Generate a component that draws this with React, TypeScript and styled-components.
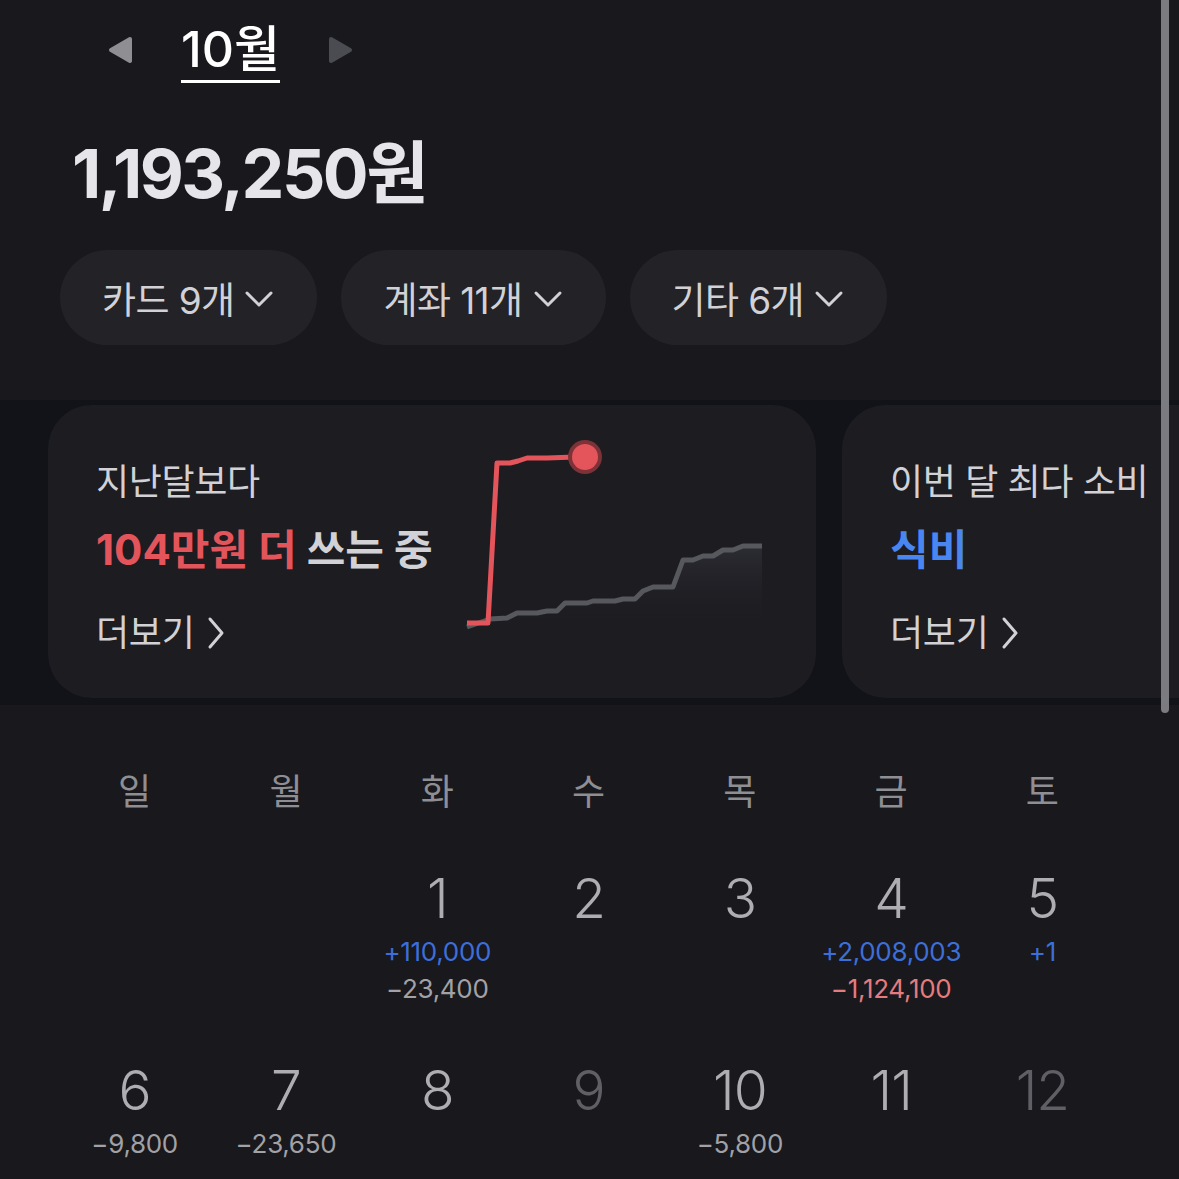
import React from "react";
import styled, { createGlobalStyle } from "styled-components";

const Global = createGlobalStyle`
  html, body { margin: 0; padding: 0; background: #18181d; }
  body { font-family: "Inter", "Noto Sans CJK KR", sans-serif; }
  * { box-sizing: border-box; }
`;

const Page = styled.div`
  position: relative;
  width: 1179px;
  height: 1179px;
  overflow: hidden;
  background: #18181d;
  color: #e5e5ea;
  font-family: "Inter", "Noto Sans CJK KR", sans-serif;
`;

const Header = styled.div`
  display: flex;
  align-items: center;
  height: 100px;
  padding-left: 107px;
  gap: 47px;
`;

const Arrow = styled.svg`
  width: 27px;
  height: 30px;
  display: block;
`;

const MonthTitle = styled.div`
  font-size: 50px;
  font-weight: 500;
  color: #ffffff;
  line-height: 1;
  letter-spacing: 0;
  padding-bottom: 6px;
  border-bottom: 3px solid #ffffff;
  margin-top: 6px;
`;

const Total = styled.div`
  margin: 33px 0 0 72px;
  font-size: 68px;
  font-weight: 700;
  color: #e5e5ea;
  line-height: 80px;
  letter-spacing: -2.5px;
`;

const Pills = styled.div`
  display: flex;
  gap: 24px;
  padding-left: 60px;
  margin-top: 37px;
`;

const Pill = styled.div`
  display: flex;
  align-items: center;
  gap: 10px;
  height: 95px;
  padding: 0 43px 0 42px;
  border-radius: 48px;
  background: #222227;
  color: #d1d1d6;
  font-size: 37px;
  font-weight: 400;
  letter-spacing: -0.6px;
`;

const Chevron = styled.svg`
  width: 30px;
  height: 30px;
  display: block;
`;

const CardBand = styled.div`
  display: flex;
  gap: 26px;
  margin-top: 55px;
  padding: 5px 0 7px 48px;
  background: #121318;
`;

const Card = styled.div<{ $w: number }>`
  flex: 0 0 ${(p) => p.$w}px;
  height: 293px;
  border-radius: 44px;
  background: #1c1c21;
  display: flex;
  padding-left: 48px;
`;

const CardText = styled.div`
  width: 364px;
  display: flex;
  flex-direction: column;
  padding-top: 52px;
`;

const CardLabel = styled.div`
  font-size: 36px;
  color: #d1d1d6;
  line-height: 50px;
  letter-spacing: -0.4px;
  white-space: nowrap;
`;

const CardHeadline = styled.div`
  font-size: 42px;
  font-weight: 700;
  color: #d1d1d6;
  line-height: 50px;
  margin-top: 18px;
  letter-spacing: 0;
  white-space: nowrap;
`;

const Accent = styled.span<{ $c: string }>`
  color: ${(p) => p.$c};
`;

const More = styled.div`
  display: flex;
  align-items: center;
  gap: 12px;
  margin-top: 33px;
  font-size: 36px;
  color: #d1d1d6;
  line-height: 50px;
  letter-spacing: -0.3px;
`;

const ChartBox = styled.svg`
  width: 310px;
  height: 210px;
  display: block;
  margin-top: 25px;
`;

const Calendar = styled.div`
  display: grid;
  grid-template-columns: repeat(7, 151.3px);
  padding-left: 59px;
  margin-top: 62px;
`;

const Weekday = styled.div`
  text-align: center;
  font-size: 36px;
  color: #8e8e93;
  line-height: 50px;
  height: 80px;
`;

const Cell = styled.div`
  display: flex;
  flex-direction: column;
  align-items: center;
  height: 192px;
  padding-top: 21px;
`;

const DayNum = styled.div<{ $dim?: boolean }>`
  font-size: 55px;
  font-weight: 300;
  line-height: 60px;
  color: ${(p) => (p.$dim ? "#5f5f65" : "#aeaeb2")};
  letter-spacing: -1px;
`;

const Amount = styled.div<{ $c: string }>`
  font-size: 26px;
  line-height: 37px;
  color: ${(p) => p.$c};
  letter-spacing: -0.3px;
  &:nth-child(2) {
    margin-top: 5px;
  }
`;

const ScrollThumb = styled.div`
  position: absolute;
  left: 1161px;
  top: 0;
  width: 8px;
  height: 713px;
  background: #7c7c80;
  border-radius: 0 0 4px 4px;
`;

const BLUE = "#3d6fd8";
const GREY = "#a1a1a6";
const RED = "#e57b7e";

type Day = { n: number; dim?: boolean; amounts?: { t: string; c: string }[] };

const weeks: (Day | null)[][] = [
  [
    null,
    null,
    { n: 1, amounts: [{ t: "+110,000", c: BLUE }, { t: "−23,400", c: GREY }] },
    { n: 2 },
    { n: 3 },
    { n: 4, amounts: [{ t: "+2,008,003", c: BLUE }, { t: "−1,124,100", c: RED }] },
    { n: 5, amounts: [{ t: "+1", c: BLUE }] },
  ],
  [
    { n: 6, amounts: [{ t: "−9,800", c: GREY }] },
    { n: 7, amounts: [{ t: "−23,650", c: GREY }] },
    { n: 8 },
    { n: 9, dim: true },
    { n: 10, amounts: [{ t: "−5,800", c: GREY }] },
    { n: 11 },
    { n: 12, dim: true },
  ],
];

const ChevronDown = () => (
  <Chevron viewBox="0 0 30 30">
    <path d="M3 10 L15 22 L27 10" fill="none" stroke="#d1d1d6" strokeWidth="3" strokeLinecap="round" strokeLinejoin="round" />
  </Chevron>
);

const ChevronRight = () => (
  <svg width="20" height="36" viewBox="0 0 20 36" style={{ display: "block" }}>
    <path d="M4 4 L16 18 L4 32" fill="none" stroke="#d1d1d6" strokeWidth="3" strokeLinecap="round" strokeLinejoin="round" />
  </svg>
);

const grey = [
  [7, 197], [30, 189], [47, 188], [57, 183], [77, 183], [87, 181], [97, 181], [105, 173],
  [127, 173], [133, 171], [155, 171], [163, 169], [175, 169], [183, 161], [193, 157], [213, 157],
  [223, 130], [233, 130], [243, 126], [253, 126], [263, 120], [273, 120], [283, 116], [302, 116],
];
const greyPts = grey.map((p) => p.join(",")).join(" ");
const greyArea = `M7,197 ${grey.map((p) => `L${p[0]},${p[1]}`).join(" ")} L302,200 L7,200 Z`;

const Chart = () => (
  <ChartBox viewBox="0 0 310 210">
    <defs>
      <linearGradient id="gfill" x1="0" y1="0" x2="0" y2="1">
        <stop offset="0" stopColor="#2c2c33" stopOpacity="1" />
        <stop offset="1" stopColor="#1c1c21" stopOpacity="0" />
      </linearGradient>
    </defs>
    <path d={greyArea} fill="url(#gfill)" />
    <polyline points={greyPts} fill="none" stroke="#57575e" strokeWidth="5" strokeLinejoin="round" />
    <polyline
      points="7,193 28,193 37,33 50,33 58,31 67,28 87,28 115,27"
      fill="none"
      stroke="#e3545b"
      strokeWidth="5"
      strokeLinejoin="round"
    />
    <circle cx="125" cy="27" r="17" fill="#7c3237" />
    <circle cx="125" cy="27" r="13" fill="#e3545b" />
  </ChartBox>
);

export default function App() {
  return (
    <Page>
      <Global />
      <Header>
        <Arrow viewBox="0 0 27 30">
          <path d="M23 4 L4 15 L23 26 Z" fill="#8e8e93" stroke="#8e8e93" strokeWidth="4" strokeLinejoin="round" />
        </Arrow>
        <MonthTitle>10월</MonthTitle>
        <Arrow viewBox="0 0 27 30">
          <path d="M4 4 L23 15 L4 26 Z" fill="#4b4b52" stroke="#4b4b52" strokeWidth="4" strokeLinejoin="round" />
        </Arrow>
      </Header>
      <Total>1,193,250원</Total>
      <Pills>
        <Pill>카드 9개<ChevronDown /></Pill>
        <Pill>계좌 11개<ChevronDown /></Pill>
        <Pill>기타 6개<ChevronDown /></Pill>
      </Pills>
      <CardBand>
        <Card $w={768}>
          <CardText>
            <CardLabel>지난달보다</CardLabel>
            <CardHeadline>
              <Accent $c="#e3545b">104만원 더</Accent> 쓰는 중
            </CardHeadline>
            <More>더보기<ChevronRight /></More>
          </CardText>
          <Chart />
        </Card>
        <Card $w={500}>
          <CardText>
            <CardLabel>이번 달 최다 소비</CardLabel>
            <CardHeadline>
              <Accent $c="#4a86f0">식비</Accent>
            </CardHeadline>
            <More>더보기<ChevronRight /></More>
          </CardText>
        </Card>
      </CardBand>
      <Calendar>
        {["일", "월", "화", "수", "목", "금", "토"].map((d) => (
          <Weekday key={d}>{d}</Weekday>
        ))}
        {weeks.flat().map((day, i) =>
          day ? (
            <Cell key={i}>
              <DayNum $dim={day.dim}>{day.n}</DayNum>
              {day.amounts?.map((a) => (
                <Amount key={a.t} $c={a.c}>{a.t}</Amount>
              ))}
            </Cell>
          ) : (
            <Cell key={i} />
          )
        )}
      </Calendar>
      <ScrollThumb />
    </Page>
  );
}
